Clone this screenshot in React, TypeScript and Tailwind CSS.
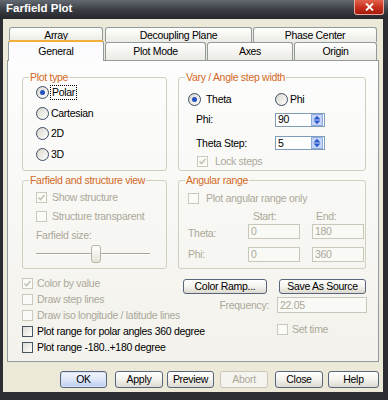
import type { ReactNode } from 'react';

const DIS = 'text-[#aca899]';

function Radio({ checked }: { checked?: boolean }) {
    return (
        <span className="w-[13px] h-[13px] shrink-0 rounded-full border border-[#3d4d66] bg-gradient-to-br from-[#d8d6cb] to-white flex items-center justify-center">
            {checked && <span className="w-[5px] h-[5px] rounded-full bg-[#2452c2]" />}
        </span>
    );
}

function Check({ checked, disabled, children, gap = 'gap-[5px]' }: { checked?: boolean; disabled?: boolean; children: ReactNode; gap?: string }) {
    return (
        <div className={`flex items-center whitespace-nowrap ${gap} ${disabled ? DIS : ''}`}>
            <span
                className={`w-[11px] h-[11px] shrink-0 border flex items-center justify-center ${
                    disabled ? 'border-[#cbc9bc] bg-[#fbfbf8]' : 'border-[#4a5563] bg-gradient-to-br from-[#dedcd2] to-white'
                }`}
            >
                {checked && (
                    <svg width="9" height="9" viewBox="0 0 9 9">
                        <path d="M1.5 4.5 L3.5 6.5 L7.5 2" fill="none" stroke={disabled ? '#c4c2b4' : '#21a121'} strokeWidth="1.6" />
                    </svg>
                )}
            </span>
            <span>{children}</span>
        </div>
    );
}

function Spin() {
    return (
        <svg width="12" height="12" viewBox="0 0 12 12" className="ml-auto mr-[1px]">
            <rect x="0.5" y="0.5" width="11" height="11" fill="#c4d5f7" stroke="#8ea8e2" />
            <polygon points="6,1.8 9.4,5.4 2.6,5.4" fill="#2a5bcc" />
            <polygon points="2.6,6.6 9.4,6.6 6,10.2" fill="#2a5bcc" />
        </svg>
    );
}

function Field({ value, disabled, spin, className }: { value: string; disabled?: boolean; spin?: boolean; className: string }) {
    return (
        <div
            className={`flex items-center border pl-[2px] ${
                disabled ? 'border-[#c9c7ba] bg-[#f9f9f6] text-[#aca899]' : 'border-[#7f9db9] bg-white'
            } ${className}`}
        >
            <span>{value}</span>
            {spin && <Spin />}
        </div>
    );
}

function Btn({ children, className, primary, disabled }: { children: ReactNode; className: string; primary?: boolean; disabled?: boolean }) {
    let look = 'border-[#596679] bg-gradient-to-b from-white via-[#f4f3ee] to-[#dcdad0]';
    if (primary) look = 'border-[#596679] bg-gradient-to-b from-[#f3f6fd] via-[#dfe7f8] to-[#bccdf0] shadow-[inset_0_0_0_1px_#d6e3fb]';
    if (disabled) look = 'border-[#c9c7ba] bg-[#f5f4ef] text-[#aca899]';
    return <div className={`flex items-center justify-center rounded-[3px] border whitespace-nowrap ${look} ${className}`}>{children}</div>;
}

function Group({ title, className, children }: { title: string; className: string; children: ReactNode }) {
    return (
        <fieldset className={`border border-[#d0d0bf] rounded-[3px] ${className}`}>
            <legend className="ml-[6px] px-[1px] leading-[11px] text-[#d2691e]">{title}</legend>
            {children}
        </fieldset>
    );
}

function Tab({ label, className }: { label: string; className: string }) {
    return (
        <div
            className={`flex items-center justify-center border border-b-0 border-[#919b9c] rounded-t-[3px] bg-gradient-to-b from-white to-[#ebeae4] ${className}`}
        >
            {label}
        </div>
    );
}

export default function App() {
    return (
        <div className="w-[388px] h-[400px] bg-[#2b2d32] flex flex-col overflow-hidden font-['Liberation_Sans',Arial,sans-serif] text-[10.5px] tracking-[-0.3px] text-black leading-none">
            {/* title bar */}
            <div className="h-[19px] shrink-0 flex items-start pl-[6px] pr-[4px] bg-gradient-to-b from-[#656972] via-[#3b3e45] to-[#25272c]">
                <span className="mt-[3px] text-white font-bold text-[11.5px] tracking-normal">Farfield Plot</span>
                <div className="ml-auto w-[30px] h-[15px] rounded-b-[3px] border border-t-0 border-[#e9a79d] bg-gradient-to-b from-[#e3624d] via-[#c8301d] to-[#a51b0e] flex items-center justify-center">
                    <svg width="9" height="8" viewBox="0 0 9 8">
                        <path d="M1 0.5 L8 7.5 M8 0.5 L1 7.5" stroke="white" strokeWidth="1.8" />
                    </svg>
                </div>
            </div>

            {/* window body */}
            <div className="mx-[3px] w-[380px] h-[373px] bg-[#ece9d8] pt-[8px] px-[4px] flex flex-col">
                {/* back tab row */}
                <div className="h-[15px] flex pl-[2px] gap-[1px]">
                    <Tab label="Array" className="w-[94px] mr-[1px]" />
                    <Tab label="Decoupling Plane" className="w-[147px]" />
                    <Tab label="Phase Center" className="w-[124px]" />
                </div>
                {/* front tab row */}
                <div className="h-[18px] flex pl-[1px] gap-[1px]">
                    <div className="w-[96px] -mt-[2px] -mb-[1px] relative z-10 flex items-center justify-center border border-b-0 border-[#919b9c] border-t-2 border-t-[#f3ae3d] rounded-t-[3px] bg-[#fcfcfe]">
                        General
                    </div>
                    <Tab label="Plot Mode" className="w-[101px]" />
                    <Tab label="Axes" className="w-[86px]" />
                    <Tab label="Origin" className="w-[83px]" />
                </div>

                {/* tab page */}
                <div className="h-[302px] shrink-0 border border-[#919b9c] bg-gradient-to-b from-[#fdfdfd] to-[#f3f2ec] pl-[14px] pt-[11px] flex flex-col">
                    <div className="grid grid-cols-[145px_188px] gap-x-[11px] gap-y-[4px]">
                        <Group title="Plot type" className="h-[99px]">
                            <div className="flex flex-col pl-[13px] -mt-[1px]">
                                <div className="h-[20.7px] flex items-center gap-[2px]">
                                    <Radio checked />
                                    <span className="outline outline-1 outline-dotted outline-black outline-offset-0 px-[1px] py-[1px]">Polar</span>
                                </div>
                                <div className="h-[20.7px] flex items-center gap-[2px]">
                                    <Radio />
                                    <span>Cartesian</span>
                                </div>
                                <div className="h-[20.7px] flex items-center gap-[2px]">
                                    <Radio />
                                    <span>2D</span>
                                </div>
                                <div className="h-[20.7px] flex items-center gap-[2px]">
                                    <Radio />
                                    <span>3D</span>
                                </div>
                            </div>
                        </Group>

                        <Group title="Vary / Angle step width" className="h-[99px]">
                            <div className="flex flex-col pl-[9px] pt-[8px]">
                                <div className="h-[16px] flex items-center">
                                    <div className="w-[87px] flex items-center gap-[5px]">
                                        <Radio checked />
                                        <span>Theta</span>
                                    </div>
                                    <div className="flex items-center gap-[2px]">
                                        <Radio />
                                        <span>Phi</span>
                                    </div>
                                </div>
                                <div className="h-[14px] mt-[5.5px] flex items-center">
                                    <span className="w-[87px] pl-[8px]">Phi:</span>
                                    <Field value="90" spin className="w-[50px] h-[14px]" />
                                </div>
                                <div className="h-[14px] mt-[9.5px] flex items-center">
                                    <span className="w-[87px] pl-[8px]">Theta Step:</span>
                                    <Field value="5" spin className="w-[50px] h-[14px]" />
                                </div>
                                <div className="h-[12px] mt-[5px] pl-[9px] flex items-center">
                                    <Check checked disabled gap="gap-[7px]">
                                        Lock steps
                                    </Check>
                                </div>
                            </div>
                        </Group>

                        <Group title="Farfield and structure view" className="h-[94px]">
                            <div className="flex flex-col pl-[13px] pt-[5.5px]">
                                <div className="h-[12px] flex items-center">
                                    <Check checked disabled>
                                        Show structure
                                    </Check>
                                </div>
                                <div className="h-[12px] mt-[6.5px] flex items-center">
                                    <Check disabled>Structure transparent</Check>
                                </div>
                                <div className={`h-[12px] mt-[7px] flex items-center ${DIS}`}>Farfield size:</div>
                                <div className="relative w-[114px] h-[18px] mt-[4px]">
                                    <div className="absolute left-0 right-0 top-[8px] h-[2px] border-t border-[#a7a597] border-b border-b-white" />
                                    <div className="absolute left-[55px] top-0 w-[10px] h-[18px] rounded-[3px] border border-[#b7b5a8] bg-gradient-to-b from-white to-[#e4e2d8]" />
                                </div>
                            </div>
                        </Group>

                        <Group title="Angular range" className="h-[94px]">
                            <div className={`flex flex-col pl-[9px] pt-[6px] ${DIS}`}>
                                <div className="h-[12px] flex items-center">
                                    <Check disabled gap="gap-[7px]">
                                        Plot angular range only
                                    </Check>
                                </div>
                                <div className="h-[12px] mt-[6px] grid grid-cols-[48px_52px_52px] gap-x-[12px] items-center">
                                    <span />
                                    <span className="pl-[5px]">Start:</span>
                                    <span className="pl-[4px]">End:</span>
                                </div>
                                <div className="h-[15px] mt-[2px] grid grid-cols-[48px_52px_52px] gap-x-[12px] items-center">
                                    <span className="pt-[3px]">Theta:</span>
                                    <Field value="0" disabled className="h-[15px]" />
                                    <Field value="180" disabled className="h-[15px]" />
                                </div>
                                <div className="h-[15px] mt-[8px] grid grid-cols-[48px_52px_52px] gap-x-[12px] items-center">
                                    <span>Phi:</span>
                                    <Field value="0" disabled className="h-[15px]" />
                                    <Field value="360" disabled className="h-[15px]" />
                                </div>
                            </div>
                        </Group>
                    </div>

                    {/* lower options */}
                    <div className="flex mt-[6.5px]">
                        <div className="w-[161px] shrink-0 flex flex-col">
                            <div className="h-[16px] flex items-center">
                                <Check checked disabled gap="gap-[4px]">
                                    Color by value
                                </Check>
                            </div>
                            <div className="h-[16px] flex items-center">
                                <Check disabled gap="gap-[4px]">
                                    Draw step lines
                                </Check>
                            </div>
                            <div className="h-[16px] flex items-center">
                                <Check disabled gap="gap-[4px]">
                                    Draw iso longitude / latitude lines
                                </Check>
                            </div>
                            <div className="h-[16px] flex items-center">
                                <Check gap="gap-[4px]">Plot range for polar angles 360 degree</Check>
                            </div>
                            <div className="h-[16px] flex items-center">
                                <Check gap="gap-[4px]">Plot range -180..+180 degree</Check>
                            </div>
                        </div>
                        <div className="flex flex-col pt-[3.5px]">
                            <div className="flex gap-[12px]">
                                <Btn className="w-[84px] h-[15px]">Color Ramp...</Btn>
                                <Btn className="w-[87px] h-[15px]">Save As Source</Btn>
                            </div>
                            <div className="h-[16px] mt-[3px] flex items-center">
                                <span className={`w-[86px] text-right ${DIS}`}>Frequency:</span>
                                <Field value="22.05" disabled className="ml-[8px] w-[90px] h-[16px]" />
                            </div>
                            <div className="h-[10px] mt-[11px] pl-[94px] flex items-center">
                                <Check disabled gap="gap-[4px]">
                                    Set time
                                </Check>
                            </div>
                        </div>
                    </div>
                </div>

                {/* dialog buttons */}
                <div className="h-[17px] mt-[9px] flex">
                    <Btn primary className="ml-[53px] w-[47px]">OK</Btn>
                    <Btn className="ml-[8px] w-[48px]">Apply</Btn>
                    <Btn className="ml-[4px] w-[47px]">Preview</Btn>
                    <Btn disabled className="ml-[6px] w-[48px]">Abort</Btn>
                    <Btn className="ml-[7px] w-[48px]">Close</Btn>
                    <Btn className="ml-[5px] w-[51px]">Help</Btn>
                </div>
            </div>
        </div>
    );
}
